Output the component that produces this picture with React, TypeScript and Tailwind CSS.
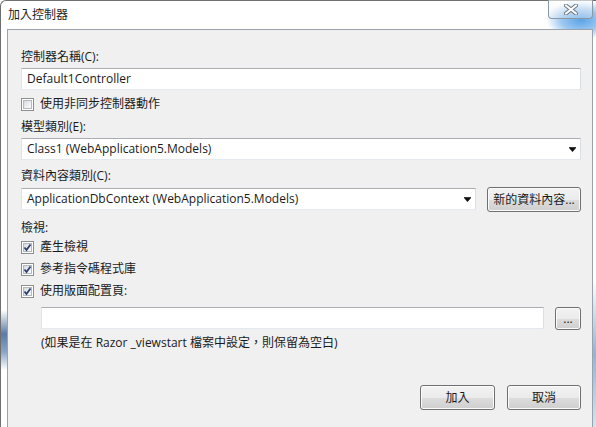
import React from "react";

const FONT = "font-['Segoe_UI','Open_Sans','Noto_Sans_CJK_TC',sans-serif]";

function TextBox({ value, className = "" }: { value?: string; className?: string }) {
  return (
    <div
      className={`h-[22px] bg-white border border-t-[#abadb3] border-l-[#e2e3ea] border-r-[#dbdfe6] border-b-[#e3e9ef] flex items-center pl-[5px] text-[12px] text-[#1a1a1a] ${className}`}
    >
      {value}
    </div>
  );
}

function Arrow() {
  return (
    <svg width="7" height="5" viewBox="0 0 7 5" className="shrink-0">
      <rect x="0" y="0" width="7" height="1" fill="#3a3a3a" />
      <polygon points="0,1 7,1 3.5,5" fill="#111" />
    </svg>
  );
}

function Select({ value, className = "" }: { value: string; className?: string }) {
  return (
    <div
      className={`h-[22px] bg-white border border-t-[#abadb3] border-l-[#e2e3ea] border-r-[#dbdfe6] border-b-[#e3e9ef] flex items-center justify-between pl-[5px] pr-[4px] text-[12px] text-[#1a1a1a] ${className}`}
    >
      <span>{value}</span>
      <Arrow />
    </div>
  );
}

function Checkbox({ checked }: { checked: boolean }) {
  return (
    <span className="w-[13px] h-[13px] border border-[#8e8f8f] bg-white flex items-center justify-center shrink-0">
      <span className="w-[9px] h-[9px] border border-[#b4b9bf] bg-[linear-gradient(135deg,#d6dadf_0%,#eef0f2_60%,#fafafa_100%)] relative">
        {checked && (
          <svg width="9" height="9" viewBox="0 0 9 9" className="absolute left-[-1px] top-[-1px]">
            <path d="M1.5 4.5 L3.5 7 L7.5 1.5" stroke="#2c3f72" strokeWidth="1.8" fill="none" />
          </svg>
        )}
      </span>
    </span>
  );
}

function CheckRow({ checked, label, className = "" }: { checked: boolean; label: string; className?: string }) {
  return (
    <div className={`h-[16px] flex items-center gap-[6px] text-[12px] text-[#1a1a1a] ${className}`}>
      <Checkbox checked={checked} />
      <span>{label}</span>
    </div>
  );
}

function Button({ children, className = "" }: { children: React.ReactNode; className?: string }) {
  return (
    <div
      className={`border border-[#707070] rounded-[3px] bg-[linear-gradient(to_bottom,#f2f2f2_0%,#ebebeb_50%,#dddddd_51%,#cfcfcf_100%)] shadow-[inset_0_0_0_1px_#fbfbfb] flex items-center justify-center text-[12px] text-[#1a1a1a] ${className}`}
    >
      {children}
    </div>
  );
}

function Label({ children, className = "" }: { children: React.ReactNode; className?: string }) {
  return <div className={`h-[16px] leading-[16px] text-[12px] text-[#1a1a1a] ${className}`}>{children}</div>;
}

export default function App() {
  return (
    <div className={`w-[596px] h-[427px] bg-white relative overflow-hidden ${FONT}`}>
      {/* window frame */}
      <div className="absolute inset-0 border-l border-t border-[#6f6f6f] rounded-tl-[6px] pointer-events-none" />
      {/* aero glow */}
      <div className="absolute right-[-20px] top-[0px] w-[70px] h-[40px] bg-[radial-gradient(ellipse_at_center,#5aa3e8_0%,#9cc8f0_40%,rgba(255,255,255,0)_70%)]" />
      <div className="absolute right-0 top-[280px] w-[4px] h-[147px] bg-[linear-gradient(to_bottom,#ffffff,#8fb5dc,#d4e4f3)]" />
      <div className="absolute left-[1px] top-[310px] w-[6px] h-[60px] bg-[linear-gradient(to_bottom,#ffffff,#5c7aa3_40%,#8aa5c5_70%,#ffffff)]" />

      <div className="relative flex flex-col h-full">
        {/* title bar */}
        <div className="h-[29px] flex items-start justify-between">
          <div className="pl-[8px] pt-[7px] text-[12px] leading-[16px] text-[#1e1e1e]">加入控制器</div>
          <div className="mr-[3px] w-[45px] h-[19px] border border-t-0 border-[#8c97a4] rounded-b-[4px] bg-[linear-gradient(to_bottom,rgba(255,255,255,0.6),rgba(220,230,240,0.4))] flex items-center justify-center">
            <svg width="14" height="11" viewBox="0 0 14 11">
              <path d="M2 1.5 L12 9.5 M12 1.5 L2 9.5" stroke="#6b7580" strokeWidth="4" strokeLinecap="round" />
              <path d="M2 1.5 L12 9.5 M12 1.5 L2 9.5" stroke="#ffffff" strokeWidth="2.2" strokeLinecap="round" />
            </svg>
          </div>
        </div>

        {/* client area */}
        <div className="flex-1 ml-[7px] mr-[3px] border border-b-0 border-[#9aa2ab] bg-[#f0f0f0] pl-[13px] pr-[11px] pt-[19px] flex flex-col">
          <Label>控制器名稱(C):</Label>
          <TextBox value="Default1Controller" className="mt-[3px]" />
          <CheckRow checked={false} label="使用非同步控制器動作" className="mt-[6px]" />
          <Label className="mt-[7px]">模型類別(E):</Label>
          <Select value="Class1 (WebApplication5.Models)" className="mt-[3px]" />
          <Label className="mt-[8px]">資料內容類別(C):</Label>
          <div className="mt-[3px] h-[25px] flex items-start gap-[11px]">
            <Select value="ApplicationDbContext (WebApplication5.Models)" className="mt-[1px] flex-1" />
            <Button className="w-[94px] h-[25px]">新的資料內容...</Button>
          </div>
          <Label className="mt-[8px]">檢視:</Label>
          <CheckRow checked label="產生檢視" className="mt-[3px]" />
          <CheckRow checked label="參考指令碼程式庫" className="mt-[6px]" />
          <CheckRow checked label="使用版面配置頁:" className="mt-[6px]" />
          <div className="mt-[8px] pl-[20px] h-[23px] flex items-start gap-[11px]">
            <TextBox className="flex-1" />
            <Button className="w-[26px] h-[23px] text-[9px] leading-none">...</Button>
          </div>
          <Label className="mt-[5px] pl-[20px]">(如果是在 Razor _viewstart 檔案中設定，則保留為空白)</Label>
          <div className="mt-[34px] flex justify-end gap-[12px]">
            <Button className="w-[75px] h-[25px]">加入</Button>
            <Button className="w-[74px] h-[25px]">取消</Button>
          </div>
        </div>
      </div>
    </div>
  );
}
